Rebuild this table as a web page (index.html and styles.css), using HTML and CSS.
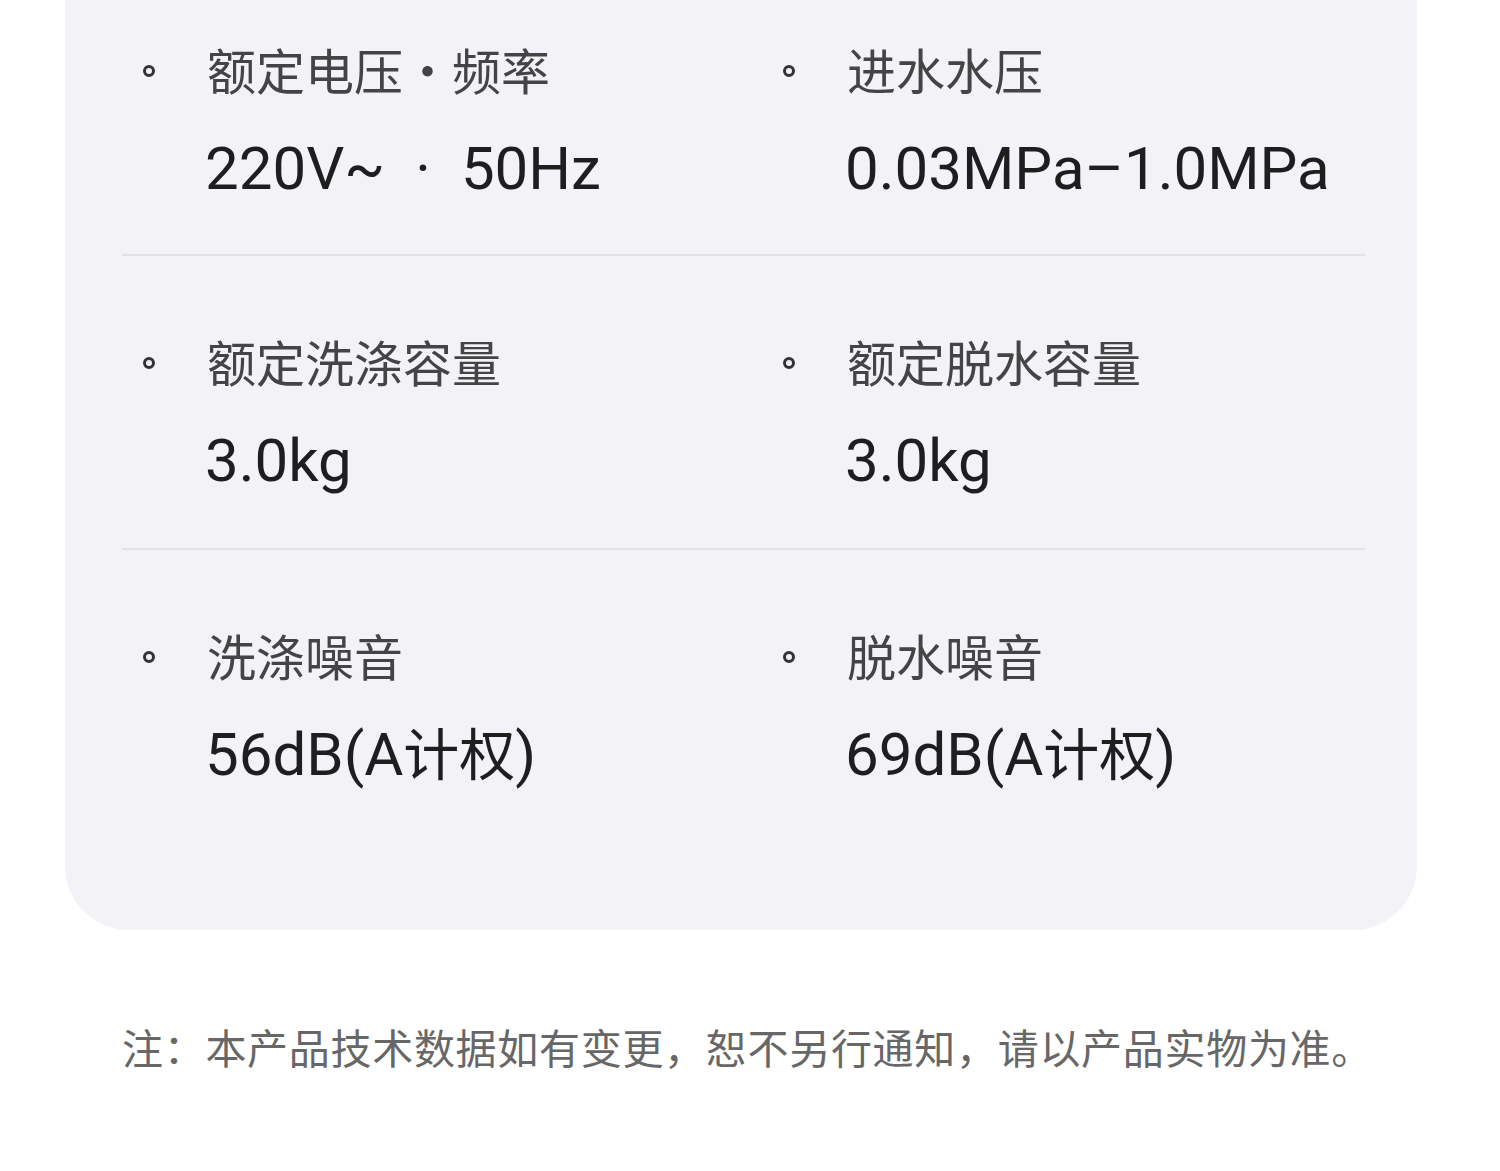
FILE: index.html
```html
<!DOCTYPE html>
<html>
<head>
	<meta charset="utf-8">
	<title>规格参数</title>
	<link rel="stylesheet" href="styles.css">
</head>
<body>
	<div class='card'>
		<div class='spec-row'>
			<div class='spec'>
				<span class='dot'></span>
				<div class='label'>额定电压・频率</div>
				<div class='value'>220V~<span class='sep'>·</span>50Hz</div>
			</div>
			<div class='spec'>
				<span class='dot'></span>
				<div class='label'>进水水压</div>
				<div class='value'>0.03MPa–1.0MPa</div>
			</div>
		</div>
		<div class='spec-row'>
			<div class='spec'>
				<span class='dot'></span>
				<div class='label'>额定洗涤容量</div>
				<div class='value'>3.0kg</div>
			</div>
			<div class='spec'>
				<span class='dot'></span>
				<div class='label'>额定脱水容量</div>
				<div class='value'>3.0kg</div>
			</div>
		</div>
		<div class='spec-row'>
			<div class='spec'>
				<span class='dot'></span>
				<div class='label'>洗涤噪音</div>
				<div class='value'>56dB(A<span class='cjk'>计权</span>)</div>
			</div>
			<div class='spec'>
				<span class='dot'></span>
				<div class='label'>脱水噪音</div>
				<div class='value'>69dB(A<span class='cjk'>计权</span>)</div>
			</div>
		</div>
	</div>

	<p class='note'>注：本产品技术数据如有变更，恕不另行通知，请以产品实物为准。</p>
</body>
</html>
```

FILE: styles.css
```css
body{
	margin: 0;
	background: #ffffff;
	font-family: Roboto, "Noto Sans CJK SC", sans-serif;
}

.card{
	width: 1352px;
	margin-left: 65px;
	margin-top: -36px;
	padding: 0 52px 87px 57px;
	box-sizing: border-box;
	background-color: #f3f2f7;
	border-radius: 0 0 64px 64px;
}

.spec-row{
	display: grid;
	grid-template-columns: 640px 1fr;
	padding: 75px 0 51px 0;
	border-bottom: 2px solid #e2e1e6;
}

.spec-row:first-child{
	padding-bottom: 49px;
}

.spec-row:last-child{
	border-bottom: none;
}

.spec{
	display: grid;
	grid-template-columns: 85px auto;
	row-gap: 34px;
}

.dot{
	width: 6px;
	height: 6px;
	border: 3px solid #333333;
	border-radius: 50%;
	margin: 3px 0 0 21px;
	align-self: center;
}

.label{
	font-family: "Noto Sans CJK SC", sans-serif;
	font-size: 49px;
	line-height: 60px;
	color: #444444;
}

.value{
	grid-column: 2;
	font-size: 60px;
	line-height: 72px;
	color: #1e1e1e;
	white-space: nowrap;
	margin-left: -2px;
}

.value .cjk{
	font-size: 56px;
}

.sep{
	padding: 0 30px;
}

.note{
	margin: 88px 0 0 122px;
	font-family: "Noto Sans CJK SC", sans-serif;
	font-size: 41px;
	letter-spacing: 0.7px;
	line-height: 56px;
	color: #676767;
}
```
